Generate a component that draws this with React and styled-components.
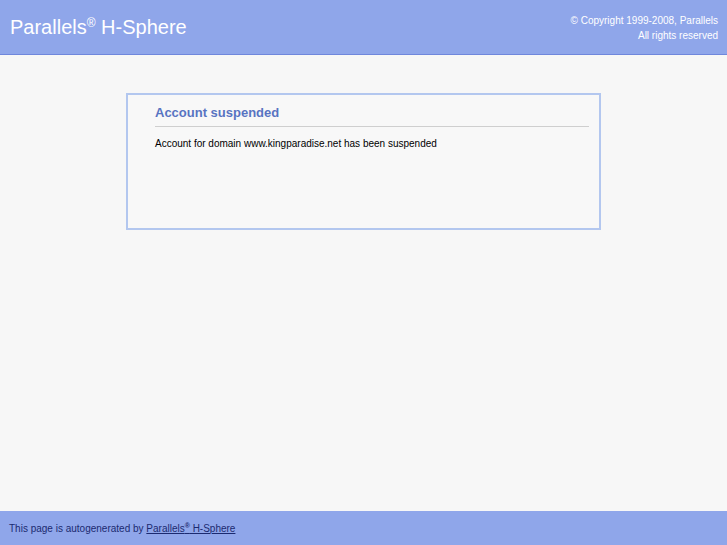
import React from 'react'
import styled, { createGlobalStyle } from 'styled-components'

const GlobalStyle = createGlobalStyle`
  html, body {
    margin: 0;
    padding: 0;
    background: #f7f7f7;
    font-family: "Liberation Sans", Arial, sans-serif;
  }
`

const Page = styled.div`
  min-height: 545px;
  display: flex;
  flex-direction: column;
`

const Header = styled.div`
  height: 54px;
  background: #8fa6ea;
  border-bottom: 1px solid #6f87dc;
  display: flex;
  justify-content: space-between;
  align-items: flex-start;
  padding: 0 9px 0 10px;
`

const Logo = styled.div`
  color: #ffffff;
  font-size: 20px;
  margin-top: 16px;
  sup {
    font-size: 12px;
    vertical-align: 7px;
    line-height: 0;
  }
`

const Copy = styled.div`
  color: #ffffff;
  font-size: 10px;
  text-align: right;
  line-height: 15px;
  margin-top: 13px;
`

const Main = styled.div`
  flex: 1;
  display: flex;
  justify-content: center;
  align-items: flex-start;
  padding-top: 38px;
`

const Box = styled.div`
  box-sizing: border-box;
  width: 475px;
  height: 137px;
  border: 2px solid #b3c7ef;
  background: #f8f8f8;
  padding: 10px 10px 0 27px;
`

const Title = styled.div`
  color: #5874c2;
  font-size: 13px;
  font-weight: bold;
  padding-bottom: 6px;
  border-bottom: 1px solid #cfcfcf;
`

const Text = styled.div`
  color: #000;
  font-size: 10px;
  margin-top: 11px;
`

const Footer = styled.div`
  height: 34px;
  background: #8fa6ea;
  display: flex;
  align-items: center;
  padding-left: 9px;
  font-size: 10px;
  color: #1b2a70;
  a {
    color: #1b2a70;
    text-decoration: underline;
  }
  sup {
    font-size: 7px;
    font-weight: bold;
    vertical-align: 4px;
    line-height: 0;
  }
`

export default function App() {
  return (
    <Page>
      <GlobalStyle />
      <Header>
        <Logo>Parallels<sup>®</sup> H-Sphere</Logo>
        <Copy>
          © Copyright 1999-2008, Parallels<br />
          All rights reserved
        </Copy>
      </Header>
      <Main>
        <Box>
          <Title>Account suspended</Title>
          <Text>Account for domain www.kingparadise.net has been suspended</Text>
        </Box>
      </Main>
      <Footer>
        This page is autogenerated by&nbsp;<a href="#">Parallels<sup>®</sup> H-Sphere</a>
      </Footer>
    </Page>
  )
}
